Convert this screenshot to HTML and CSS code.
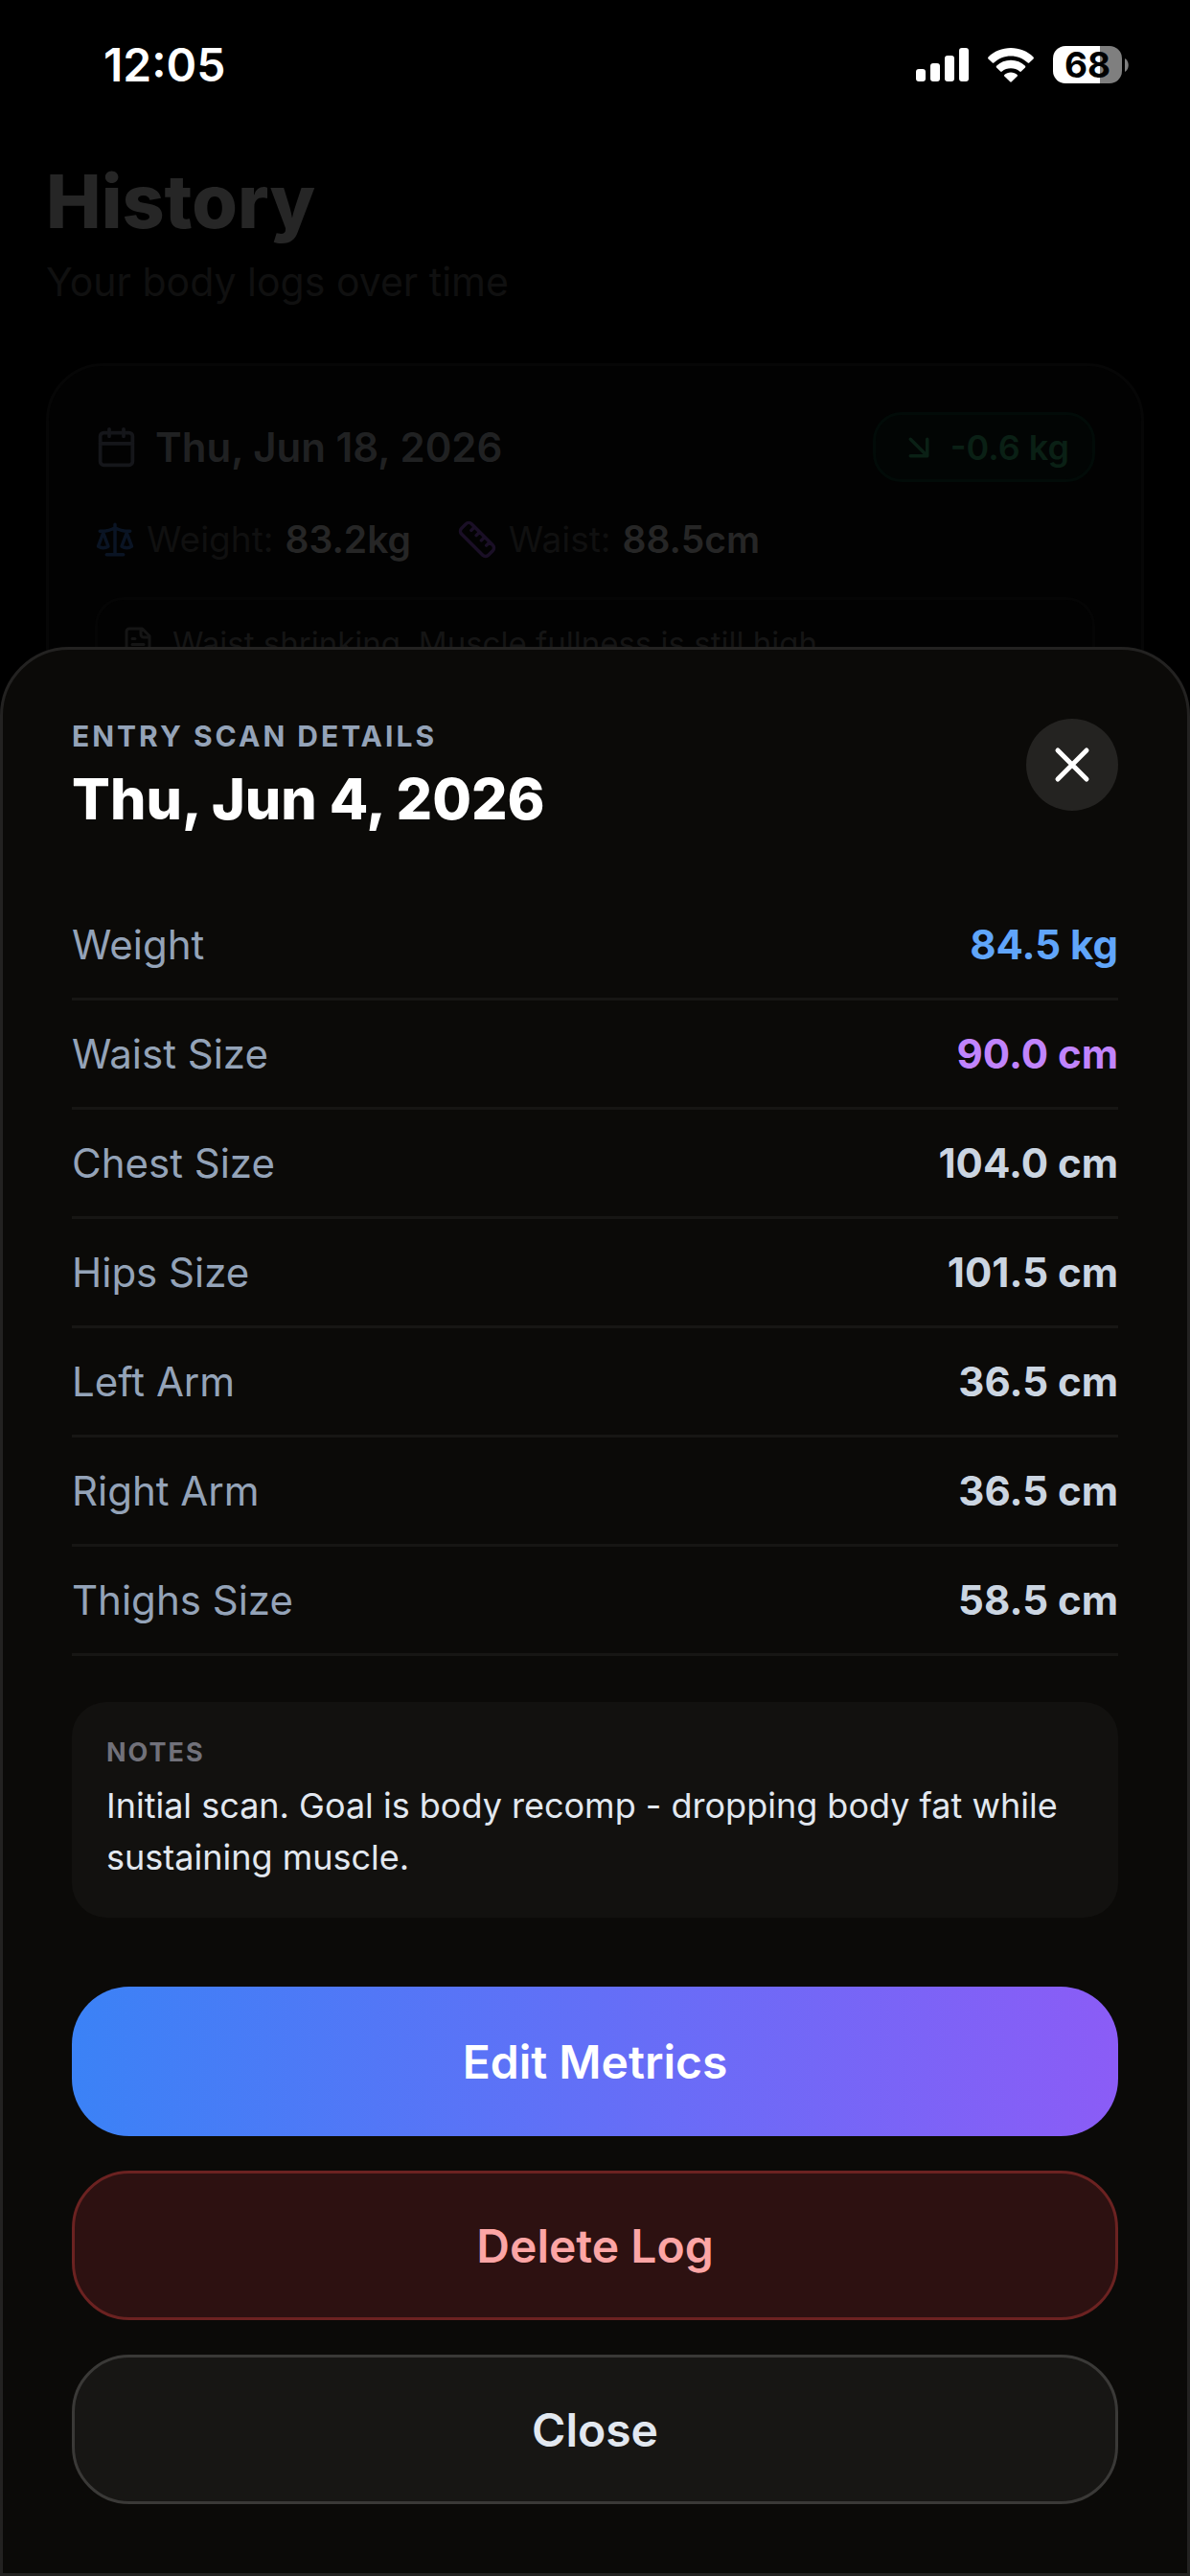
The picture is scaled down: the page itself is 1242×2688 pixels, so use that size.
FILE: index.html
```html
<!DOCTYPE html>
<html lang="en">
<head>
<meta charset="utf-8">
<meta name="viewport" content="width=device-width, initial-scale=1">
<title>History</title>
<link rel="stylesheet" href="styles.css">
</head>
<body>
<div class="app">
  <div class="status-bar">
    <span class="time">12:05</span>
    <div class="status-icons">
      <svg class="signal" width="55" height="36" viewBox="0 0 55 36" fill="#fff" aria-hidden="true">
        <rect x="0" y="22" width="10" height="13" rx="3"/><rect x="15" y="16" width="10" height="19" rx="3"/><rect x="30" y="8" width="10" height="27" rx="3"/><rect x="45" y="0" width="10" height="35" rx="3"/>
      </svg>
      <svg class="wifi" width="48" height="36" viewBox="0 0 48 36" fill="#fff" aria-hidden="true">
        <path d="M24 0C33 0 41.500 3.500 47.500 9.500Q48.300 10.500 47.500 11.400L43.200 15.500Q42.500 16 41.700 15.400C36.800 10.800 30.600 8.400 24 8.400S11.200 10.800 6.300 15.400Q5.500 16 4.800 15.500L.5 11.400Q-.3 10.500.5 9.500C6.500 3.500 15 0 24 0Z"/>
        <path d="M24 12.800C29.800 12.800 35 15 39 18.800Q39.700 19.700 39 20.500L34.800 24.600Q34 25.200 33.200 24.500C30.700 22.300 27.500 21.200 24 21.200S17.300 22.300 14.800 24.500Q14 25.200 13.200 24.600L9 20.500Q8.300 19.700 9 18.800C13 15 18.200 12.800 24 12.800Z"/>
        <path d="M24 25.500C26.600 25.500 29 26.400 30.700 28Q31.400 28.800 30.700 29.500L24.800 35.300Q24 36 23.200 35.300L17.300 29.500Q16.600 28.800 17.300 28C19 26.400 21.400 25.500 24 25.500Z"/>
      </svg>
      <div class="battery">
        <span class="battery-body">68</span>
        <svg width="4" height="14" viewBox="0 0 4 14" fill="#7f7f7f" aria-hidden="true"><path d="M0 0C5 3 5 11 0 14Z"/></svg>
      </div>
    </div>
  </div>

  <main class="history">
    <h1>History</h1>
    <p class="subtitle">Your body logs over time</p>
    <article class="log-card">
      <div class="log-head">
        <svg class="icon calendar" viewBox="0 0 24 24" aria-hidden="true"><rect x="3" y="4" width="18" height="18" rx="2"/><path d="M8 2v4M16 2v4M3 10h18"/></svg>
        <span class="log-date">Thu, Jun 18, 2026</span>
        <span class="delta"><svg class="icon arrow" viewBox="0 0 24 24" aria-hidden="true"><path d="m7 7 10 10M17 7v10H7"/></svg>-0.6 kg</span>
      </div>
      <div class="log-metrics">
        <span class="metric"><svg class="icon scale" viewBox="0 0 24 24" aria-hidden="true"><path d="m16 16 3-8 3 8c-.87.65-1.920 1-3 1s-2.130-.35-3-1ZM2 16l3-8 3 8c-.87.65-1.920 1-3 1s-2.130-.35-3-1ZM7 21h10M12 3v18M3 7h2c2 0 5-1 7-2 2 1 5 2 7 2h2"/></svg>Weight: <b>83.2kg</b></span>
        <span class="metric"><svg class="icon ruler" viewBox="0 0 24 24" aria-hidden="true"><path d="M21.300 15.300a2.400 2.400 0 0 1 0 3.400l-2.600 2.600a2.400 2.400 0 0 1-3.400 0L2.700 8.700a2.410 2.410 0 0 1 0-3.400l2.600-2.600a2.410 2.410 0 0 1 3.400 0ZM14.500 12.500l2-2M11.500 9.500l2-2M8.500 6.500l2-2M17.500 15.500l2-2"/></svg>Waist: <b>88.5cm</b></span>
      </div>
      <div class="log-note">
        <svg class="icon doc" viewBox="0 0 24 24" aria-hidden="true"><path d="M15 2H6a2 2 0 0 0-2 2v16a2 2 0 0 0 2 2h12a2 2 0 0 0 2-2V7ZM14 2v4a2 2 0 0 0 2 2h4M10 9H8M16 13H8M16 17H8"/></svg>
        <span>Waist shrinking. Muscle fullness is still high.</span>
      </div>
    </article>
  </main>

  <section class="sheet" role="dialog" aria-labelledby="sheet-title">
    <header class="sheet-head">
      <div>
        <p class="eyebrow">ENTRY SCAN DETAILS</p>
        <h2 id="sheet-title">Thu, Jun 4, 2026</h2>
      </div>
      <button class="close-icon" type="button" aria-label="Close details"><svg viewBox="0 0 24 24" aria-hidden="true"><path d="M18 6 6 18M6 6l12 12"/></svg></button>
    </header>
    <dl class="rows">
      <div class="row"><dt>Weight</dt><dd class="blue">84.5 kg</dd></div>
      <div class="row"><dt>Waist Size</dt><dd class="purple">90.0 cm</dd></div>
      <div class="row"><dt>Chest Size</dt><dd>104.0 cm</dd></div>
      <div class="row"><dt>Hips Size</dt><dd>101.5 cm</dd></div>
      <div class="row"><dt>Left Arm</dt><dd>36.5 cm</dd></div>
      <div class="row"><dt>Right Arm</dt><dd>36.5 cm</dd></div>
      <div class="row"><dt>Thighs Size</dt><dd>58.5 cm</dd></div>
    </dl>
    <div class="notes">
      <h3>NOTES</h3>
      <p>Initial scan. Goal is body recomp - dropping body fat while sustaining muscle.</p>
    </div>
    <div class="actions">
      <button class="btn edit" type="button">Edit Metrics</button>
      <button class="btn delete" type="button">Delete Log</button>
      <button class="btn close" type="button">Close</button>
    </div>
  </section>
</div>
</body>
</html>
```
FILE: styles.css
```css
* { box-sizing: border-box; }

body {
  margin: 0;
  background: #000;
  color: #fff;
  font-family: Inter, "Liberation Sans", sans-serif;
}

h1, h2, h3, p, dl, dd { margin: 0; }

button { font: inherit; cursor: pointer; }

.app {
  position: relative;
  display: flex;
  flex-direction: column;
  justify-content: flex-end;
  min-height: 100vh;
  overflow: hidden;
}

/* Status bar */
.status-bar {
  position: absolute;
  inset: 0 0 auto 0;
  display: flex;
  justify-content: space-between;
  align-items: center;
  height: 135px;
  padding: 0 64px 0 108px;
}

.time { font-size: 48px; font-weight: 600; }

.status-icons { display: flex; align-items: center; gap: 20px; }
.status-icons svg { display: block; }

.battery { display: flex; align-items: center; gap: 3px; }

.battery-body {
  width: 72px;
  height: 39px;
  border-radius: 13px;
  background: linear-gradient(90deg, #fff 68%, #7f7f7f 68%);
  color: #000;
  font-size: 37px;
  font-weight: 700;
  line-height: 39px;
  text-align: center;
}

/* Page behind the sheet */
.history {
  position: absolute;
  inset: 0 0 auto 0;
  padding: 168px 48px 0;
}

.history h1 {
  color: #262626;
  font-size: 77px;
  font-weight: 800;
  line-height: 84px;
}

.subtitle {
  margin-top: 18px;
  color: #101010;
  font-size: 41px;
  line-height: 48px;
}

.log-card {
  margin-top: 61px;
  padding: 48px;
  border: 3px solid #060606;
  border-radius: 60px;
  background: #020202;
}

.icon {
  flex: none;
  width: 45px;
  height: 45px;
  fill: none;
  stroke: currentColor;
  stroke-width: 2;
  stroke-linecap: round;
  stroke-linejoin: round;
}

.log-head { display: flex; align-items: center; gap: 18px; }
.calendar { color: #15161a; }
.log-date { color: #202122; font-size: 42px; font-weight: 600; }

.delta {
  display: flex;
  align-items: center;
  gap: 12px;
  height: 73px;
  margin-left: auto;
  padding: 0 24px;
  border: 3px solid #020b08;
  border-radius: 30px;
  background: #020504;
  color: #0a2015;
  font-size: 36px;
  font-weight: 600;
}

.arrow { width: 42px; height: 42px; }

.log-metrics { display: flex; gap: 48px; margin-top: 36px; }

.metric {
  display: flex;
  align-items: center;
  gap: 12px;
  color: #101010;
  font-size: 37px;
  line-height: 48px;
}

.metric b { color: #262626; font-size: 39px; font-weight: 600; }
.metric .icon { width: 42px; height: 42px; }
.scale { color: #0a1424; }
.ruler { color: #1a0f26; }

.log-note {
  display: flex;
  align-items: center;
  gap: 18px;
  margin-top: 36px;
  padding: 24px;
  border: 3px solid #050505;
  border-radius: 30px;
  color: #151515;
  font-size: 33px;
  line-height: 42px;
}

.doc { width: 36px; height: 36px; }

/* Detail sheet */
.sheet {
  position: relative;
  padding: 72px;
  border: 3px solid #232221;
  border-radius: 72px 72px 0 0;
  background: #0b0a08;
}

.sheet-head {
  display: flex;
  justify-content: space-between;
  align-items: flex-start;
  margin-bottom: 60px;
}

.eyebrow {
  color: #94a3b8;
  font-size: 30px;
  font-weight: 700;
  letter-spacing: 3px;
  line-height: 36px;
}

.sheet h2 {
  margin-top: 12px;
  font-size: 59px;
  font-weight: 800;
  line-height: 72px;
}

.close-icon {
  display: flex;
  justify-content: center;
  align-items: center;
  width: 96px;
  height: 96px;
  padding: 0;
  border: 0;
  border-radius: 50%;
  background: #242321;
}

.close-icon svg {
  width: 60px;
  height: 60px;
  fill: none;
  stroke: #fff;
  stroke-width: 2;
  stroke-linecap: round;
}

.row {
  display: flex;
  justify-content: space-between;
  align-items: center;
  height: 114px;
  border-bottom: 3px solid #171614;
  font-size: 42px;
  line-height: 51px;
}

.row dt { color: #94a3b8; }
.row dd { color: #cbd5e1; font-weight: 700; }
.row .blue { color: #60a5fa; }
.row .purple { color: #c084fc; }

.notes {
  margin-top: 48px;
  padding: 36px;
  border-radius: 36px;
  background: #12110f;
}

.notes h3 {
  color: #71717a;
  font-size: 27px;
  font-weight: 700;
  letter-spacing: 2px;
  line-height: 33px;
}

.notes p {
  margin-top: 12px;
  color: #e2e8f0;
  font-size: 36px;
  line-height: 54px;
}

.actions {
  display: flex;
  flex-direction: column;
  gap: 36px;
  margin-top: 72px;
}

.btn {
  height: 156px;
  border: 3px solid transparent;
  border-radius: 60px;
  font-size: 48px;
  font-weight: 600;
}

.edit {
  border: 0;
  background: linear-gradient(90deg, #3b82f6, #636ff7 50%, #8b5cf6);
  color: #fff;
}

.delete { border-color: #6b2221; background: #2d1111; color: #fca5a5; }
.close { border-color: #3a3937; background: #171614; color: #e2e8f0; }
```
